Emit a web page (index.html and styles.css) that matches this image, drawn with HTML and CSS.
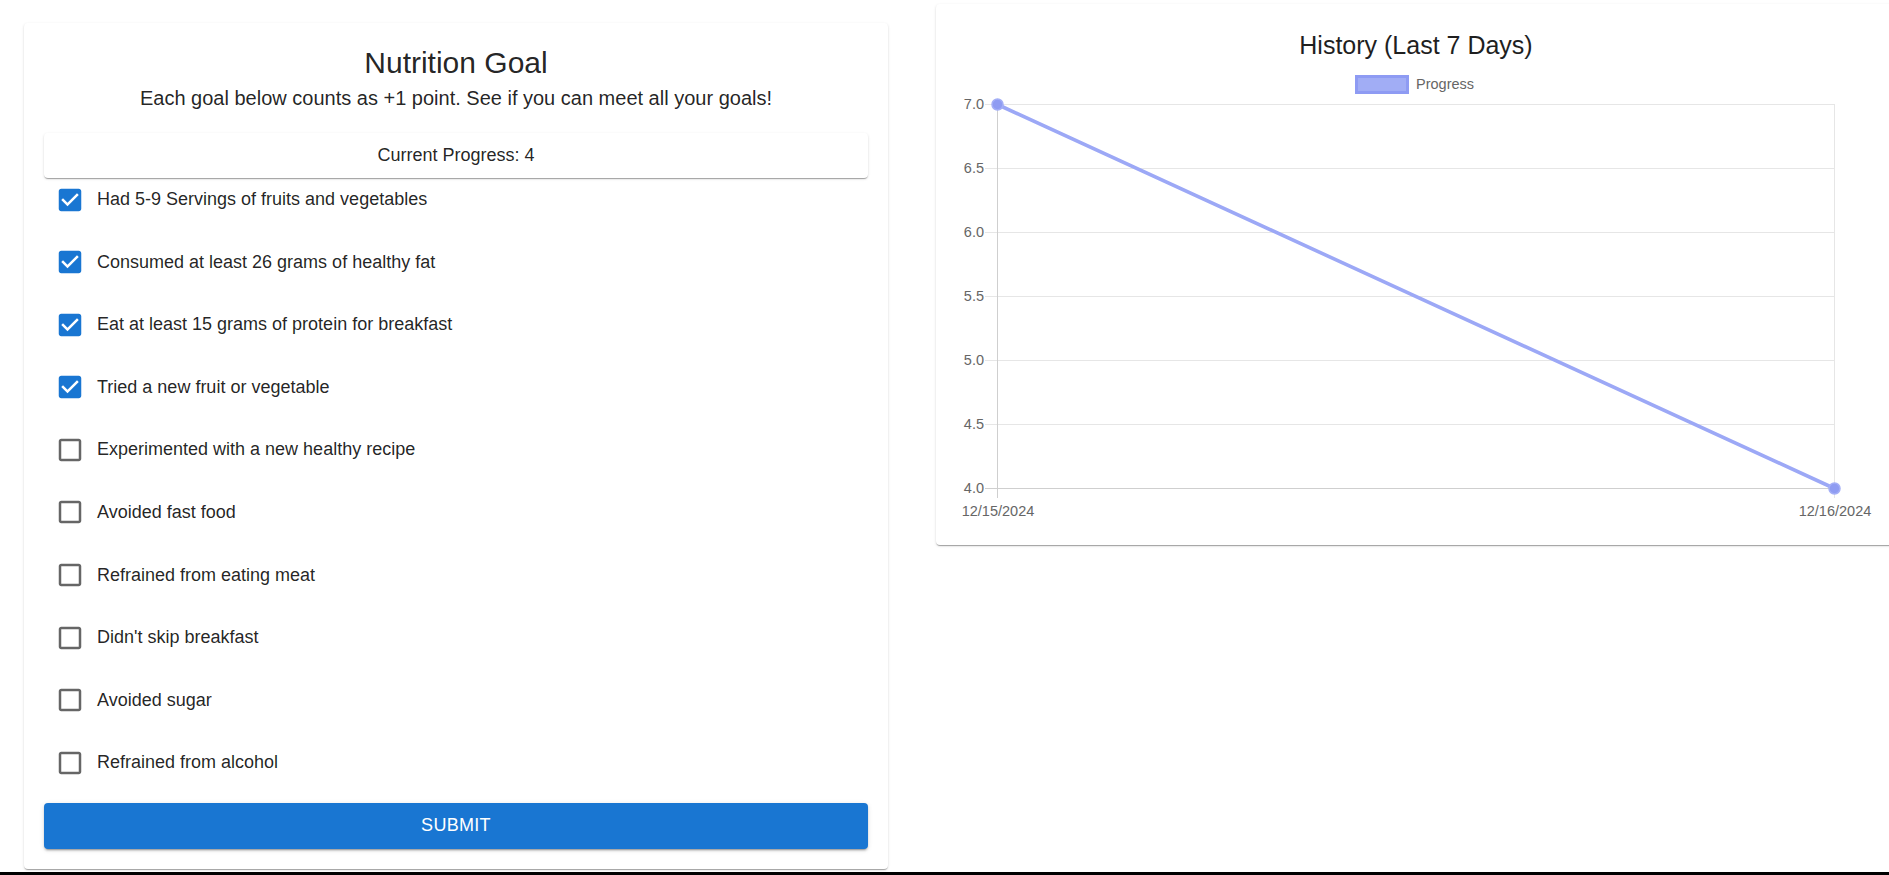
FILE: index.html
```html
<!DOCTYPE html>
<html lang="en">
<head>
<meta charset="utf-8">
<title>Nutrition Goal</title>
<link rel="stylesheet" href="styles.css">
</head>
<body>
<div class="page">
  <section class="card goal-card">
    <h1 class="goal-title">Nutrition Goal</h1>
    <p class="goal-sub">Each goal below counts as +1 point. See if you can meet all your goals!</p>
    <div class="progress-box">Current Progress: 4</div>
    <ul class="goal-list">
      <li class="goal-row"><svg class="cb checked" viewBox="0 0 24 24"><path d="M19 3H5c-1.11 0-2 .9-2 2v14c0 1.1.89 2 2 2h14c1.1 0 2-.9 2-2V5c0-1.1-.9-2-2-2zm-9 14l-5-5 1.41-1.41L10 14.17l7.59-7.59L19 8l-7 7z"/></svg><span>Had 5-9 Servings of fruits and vegetables</span></li>
      <li class="goal-row"><svg class="cb checked" viewBox="0 0 24 24"><path d="M19 3H5c-1.11 0-2 .9-2 2v14c0 1.1.89 2 2 2h14c1.1 0 2-.9 2-2V5c0-1.1-.9-2-2-2zm-9 14l-5-5 1.41-1.41L10 14.17l7.59-7.59L19 8l-7 7z"/></svg><span>Consumed at least 26 grams of healthy fat</span></li>
      <li class="goal-row"><svg class="cb checked" viewBox="0 0 24 24"><path d="M19 3H5c-1.11 0-2 .9-2 2v14c0 1.1.89 2 2 2h14c1.1 0 2-.9 2-2V5c0-1.1-.9-2-2-2zm-9 14l-5-5 1.41-1.41L10 14.17l7.59-7.59L19 8l-7 7z"/></svg><span>Eat at least 15 grams of protein for breakfast</span></li>
      <li class="goal-row"><svg class="cb checked" viewBox="0 0 24 24"><path d="M19 3H5c-1.11 0-2 .9-2 2v14c0 1.1.89 2 2 2h14c1.1 0 2-.9 2-2V5c0-1.1-.9-2-2-2zm-9 14l-5-5 1.41-1.41L10 14.17l7.59-7.59L19 8l-7 7z"/></svg><span>Tried a new fruit or vegetable</span></li>
      <li class="goal-row"><svg class="cb" viewBox="0 0 24 24"><path d="M19 5v14H5V5h14m0-2H5c-1.1 0-2 .9-2 2v14c0 1.1.9 2 2 2h14c1.1 0 2-.9 2-2V5c0-1.1-.9-2-2-2z"/></svg><span>Experimented with a new healthy recipe</span></li>
      <li class="goal-row"><svg class="cb" viewBox="0 0 24 24"><path d="M19 5v14H5V5h14m0-2H5c-1.1 0-2 .9-2 2v14c0 1.1.9 2 2 2h14c1.1 0 2-.9 2-2V5c0-1.1-.9-2-2-2z"/></svg><span>Avoided fast food</span></li>
      <li class="goal-row"><svg class="cb" viewBox="0 0 24 24"><path d="M19 5v14H5V5h14m0-2H5c-1.1 0-2 .9-2 2v14c0 1.1.9 2 2 2h14c1.1 0 2-.9 2-2V5c0-1.1-.9-2-2-2z"/></svg><span>Refrained from eating meat</span></li>
      <li class="goal-row"><svg class="cb" viewBox="0 0 24 24"><path d="M19 5v14H5V5h14m0-2H5c-1.1 0-2 .9-2 2v14c0 1.1.9 2 2 2h14c1.1 0 2-.9 2-2V5c0-1.1-.9-2-2-2z"/></svg><span>Didn't skip breakfast</span></li>
      <li class="goal-row"><svg class="cb" viewBox="0 0 24 24"><path d="M19 5v14H5V5h14m0-2H5c-1.1 0-2 .9-2 2v14c0 1.1.9 2 2 2h14c1.1 0 2-.9 2-2V5c0-1.1-.9-2-2-2z"/></svg><span>Avoided sugar</span></li>
      <li class="goal-row"><svg class="cb" viewBox="0 0 24 24"><path d="M19 5v14H5V5h14m0-2H5c-1.1 0-2 .9-2 2v14c0 1.1.9 2 2 2h14c1.1 0 2-.9 2-2V5c0-1.1-.9-2-2-2z"/></svg><span>Refrained from alcohol</span></li>
    </ul>
    <button class="submit-btn" type="button">Submit</button>
  </section>

  <section class="card history-card">
    <svg class="chart" width="990" height="541" viewBox="0 0 990 541">
      <text class="chart-title" x="480" y="50" text-anchor="middle">History (Last 7 Days)</text>
      <rect x="420.5" y="72.5" width="51" height="16" fill="rgba(130,145,242,0.75)" stroke="#8e9bf3" stroke-width="3"/>
      <text class="chart-label" x="480" y="85">Progress</text>

      <g stroke="#e6e6e6" stroke-width="1">
        <line x1="49" y1="164.5" x2="898" y2="164.5"/>
        <line x1="49" y1="228.5" x2="898" y2="228.5"/>
        <line x1="49" y1="292.5" x2="898" y2="292.5"/>
        <line x1="49" y1="356.5" x2="898" y2="356.5"/>
        <line x1="49" y1="420.5" x2="898" y2="420.5"/>
        <line x1="49" y1="100.5" x2="898" y2="100.5"/>
        <line x1="898.5" y1="100" x2="898.5" y2="494"/>
      </g>
      <g stroke="#cfcfcf" stroke-width="1">
        <line x1="49" y1="484.5" x2="898" y2="484.5"/>
        <line x1="61.5" y1="100" x2="61.5" y2="494"/>
      </g>

      <g class="chart-label" text-anchor="end">
        <text x="48" y="105">7.0</text>
        <text x="48" y="169">6.5</text>
        <text x="48" y="233">6.0</text>
        <text x="48" y="297">5.5</text>
        <text x="48" y="361">5.0</text>
        <text x="48" y="425">4.5</text>
        <text x="48" y="489">4.0</text>
      </g>
      <g class="chart-label" text-anchor="middle">
        <text x="62" y="512">12/15/2024</text>
        <text x="899" y="512">12/16/2024</text>
      </g>

      <line x1="61.5" y1="100.5" x2="898.5" y2="484.5" stroke="#9ca8f6" stroke-width="3.6" stroke-linecap="round"/>
      <circle cx="61.5" cy="100.5" r="5.5" fill="#8f9cf2" stroke="#a3aef6" stroke-width="1.5"/>
      <circle cx="898.5" cy="484.5" r="5.5" fill="#8f9cf2" stroke="#a3aef6" stroke-width="1.5"/>
    </svg>
  </section>
</div>
<div class="bottom-bar"></div>
</body>
</html>
```

FILE: styles.css
```css
html, body {
  margin: 0;
  padding: 0;
  background: #ffffff;
  overflow: hidden;
}

body {
  font-family: "Liberation Sans", Arial, sans-serif;
  color: rgba(0, 0, 0, 0.87);
}

.page {
  display: flex;
  align-items: flex-start;
  gap: 48px;
  padding-left: 24px;
  height: 872px;
  box-sizing: border-box;
}

.card {
  background: #fff;
  border-radius: 4px;
  box-shadow: 0px 2px 1px -1px rgba(0, 0, 0, 0.2), 0px 1px 1px 0px rgba(0, 0, 0, 0.14), 0px 1px 3px 0px rgba(0, 0, 0, 0.12);
  flex-shrink: 0;
}

.goal-card {
  width: 864px;
  margin-top: 23px;
  padding: 20px;
  box-sizing: border-box;
  display: flex;
  flex-direction: column;
}

.goal-title {
  margin: 0;
  font-size: 30px;
  line-height: 40px;
  font-weight: 400;
  text-align: center;
}

.goal-sub {
  margin: 1px 0 0;
  font-size: 20px;
  line-height: 28px;
  text-align: center;
}

.progress-box {
  margin-top: 21px;
  height: 45px;
  display: flex;
  align-items: center;
  justify-content: center;
  font-size: 18px;
  border-radius: 4px;
  box-shadow: 0px 2px 1px -1px rgba(0, 0, 0, 0.2), 0px 1px 1px 0px rgba(0, 0, 0, 0.14), 0px 1px 3px 0px rgba(0, 0, 0, 0.12);
}

.goal-list {
  list-style: none;
  margin: 0;
  padding: 2px 0 0;
  display: flex;
  flex-direction: column;
  gap: 23.4px;
}

.goal-row {
  height: 39.2px;
  display: flex;
  align-items: center;
  font-size: 18px;
}

.cb {
  width: 30px;
  height: 30px;
  margin-left: 11px;
  margin-right: 12px;
  fill: rgba(0, 0, 0, 0.6);
  flex-shrink: 0;
}

.cb.checked {
  fill: #1976d2;
}

.submit-btn {
  margin-top: 20.4px;
  height: 46px;
  border: none;
  border-radius: 4px;
  background: #1976d2;
  color: #fff;
  font-family: "Liberation Sans", Arial, sans-serif;
  font-size: 18px;
  text-transform: uppercase;
  letter-spacing: 0.3px;
  box-shadow: 0px 3px 1px -2px rgba(0, 0, 0, 0.2), 0px 2px 2px 0px rgba(0, 0, 0, 0.14), 0px 1px 5px 0px rgba(0, 0, 0, 0.12);
}

.history-card {
  width: 990px;
  height: 541px;
  margin-top: 4px;
  overflow: hidden;
}

.chart {
  display: block;
}

.chart-title {
  font-family: "Liberation Sans", Arial, sans-serif;
  font-size: 25px;
  fill: #1f1f1f;
}

.chart-label {
  font-family: "Liberation Sans", Arial, sans-serif;
  font-size: 14.5px;
  fill: #666666;
}

.bottom-bar {
  height: 3px;
  background: #000;
}
```
